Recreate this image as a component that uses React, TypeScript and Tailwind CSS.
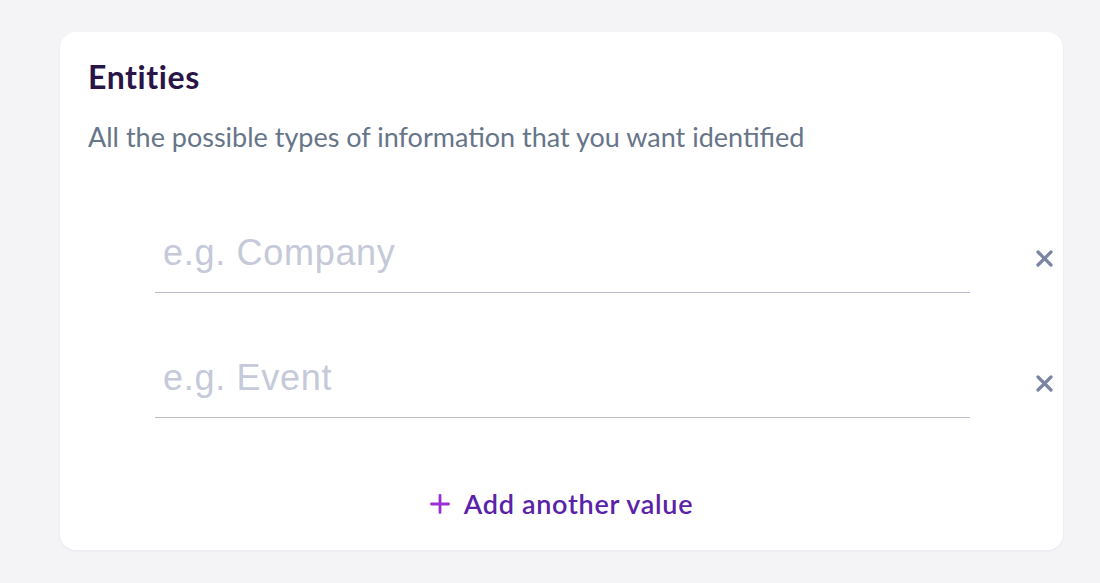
import React from "react";

function XIcon() {
  return (
    <svg width="17" height="17" viewBox="0 0 17 17" fill="none">
      <path d="M2 2L15 15M15 2L2 15" stroke="#7c84a3" strokeWidth="3.2" strokeLinecap="round" />
    </svg>
  );
}

function PlusIcon() {
  return (
    <svg width="20" height="20" viewBox="0 0 20 20" fill="none">
      <path d="M10 1.5V18.5M1.5 10H18.5" stroke="#9a2fd3" strokeWidth="2.8" strokeLinecap="round" />
    </svg>
  );
}

function Row({ placeholder }: { placeholder: string }) {
  return (
    <div className="flex items-center">
      <div className="ml-[95px] w-[815px] border-b border-[#b9bbcc] h-[69px] flex items-end">
        <input
          placeholder={placeholder}
          className="w-full bg-transparent outline-none pl-[8px] pb-[18px] text-[36px] tracking-[0.7px] leading-none placeholder:text-[#c5c9d9] text-[#333]"
          style={{ fontFamily: '"Liberation Sans", Arial, sans-serif' }}
        />
      </div>
      <div className="ml-[66px] flex items-center">
        <XIcon />
      </div>
    </div>
  );
}

export default function App() {
  return (
    <div className="w-[1100px] h-[583px] bg-[#f4f4f7] pt-[32px] pl-[60px]" style={{ fontFamily: 'Lato, "Noto Sans", sans-serif' }}>
      <div className="w-[1003px] h-[518px] bg-white rounded-[16px] shadow-[0_1px_3px_rgba(40,40,80,0.05)] pt-[25px] pl-[28px]">
        <h2 className="text-[32px] font-bold tracking-[0.6px] text-[#2a1547] leading-[40px]">Entities</h2>
        <p className="mt-[23px] text-[27px] text-[#677589] leading-[34px]">All the possible types of information that you want identified</p>
        <div className="mt-[70px] -ml-[28px] flex flex-col gap-[56px]">
          <Row placeholder="e.g. Company" />
          <Row placeholder="e.g. Event" />
        </div>
        <div className="mt-[72px] -ml-[28px] flex justify-center items-center gap-[14px]">
          <PlusIcon />
          <span className="text-[27px] font-semibold tracking-[0.7px] text-[#5a22a8] leading-none">Add another value</span>
        </div>
      </div>
    </div>
  );
}
